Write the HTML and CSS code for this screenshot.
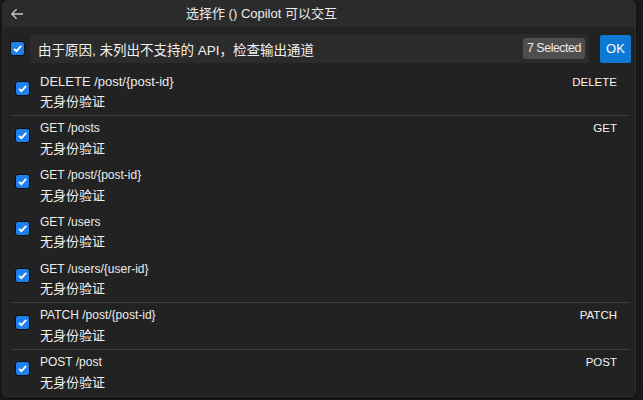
FILE: index.html
```html
<!DOCTYPE html>
<html lang="zh">
<head>
<meta charset="utf-8">
<title>Copilot</title>
<link rel="stylesheet" href="styles.css">
</head>
<body>
<div class="dialog">
  <div class="header">
    <svg class="back" width="16" height="16" viewBox="0 0 16 16"><path d="M14 8H2.8M7.6 3.2 2.8 8l4.8 4.8" fill="none" stroke="#c5c5c5" stroke-width="1.3"/></svg>
    <div class="title">选择作 () Copilot 可以交互</div>
  </div>
  <div class="inputrow">
    <span class="cb"><svg width="11" height="11" viewBox="0 0 11 11"><path d="M2 5.8 4.4 8.2 9.2 2.8" fill="none" stroke="#fff" stroke-width="1.9"/></svg></span>
    <div class="input">
      <span class="input-text">由于原因, 未列出不支持的 API，检查输出通道</span>
      <span class="badge">7 Selected</span>
    </div>
    <button class="ok">OK</button>
  </div>
  <div class="list">
    <div class="row">
      <span class="cb"><svg width="11" height="11" viewBox="0 0 11 11"><path d="M2 5.8 4.4 8.2 9.2 2.8" fill="none" stroke="#fff" stroke-width="1.9"/></svg></span>
      <div class="labels">
        <div class="line"><span class="name big">DELETE /post/{post-id}</span><span class="method">DELETE</span></div>
        <div class="desc">无身份验证</div>
      </div>
    </div>
    <div class="row sep">
      <span class="cb"><svg width="11" height="11" viewBox="0 0 11 11"><path d="M2 5.8 4.4 8.2 9.2 2.8" fill="none" stroke="#fff" stroke-width="1.9"/></svg></span>
      <div class="labels">
        <div class="line"><span class="name">GET /posts</span><span class="method">GET</span></div>
        <div class="desc">无身份验证</div>
      </div>
    </div>
    <div class="row">
      <span class="cb"><svg width="11" height="11" viewBox="0 0 11 11"><path d="M2 5.8 4.4 8.2 9.2 2.8" fill="none" stroke="#fff" stroke-width="1.9"/></svg></span>
      <div class="labels">
        <div class="line"><span class="name">GET /post/{post-id}</span></div>
        <div class="desc">无身份验证</div>
      </div>
    </div>
    <div class="row">
      <span class="cb"><svg width="11" height="11" viewBox="0 0 11 11"><path d="M2 5.8 4.4 8.2 9.2 2.8" fill="none" stroke="#fff" stroke-width="1.9"/></svg></span>
      <div class="labels">
        <div class="line"><span class="name">GET /users</span></div>
        <div class="desc">无身份验证</div>
      </div>
    </div>
    <div class="row">
      <span class="cb"><svg width="11" height="11" viewBox="0 0 11 11"><path d="M2 5.8 4.4 8.2 9.2 2.8" fill="none" stroke="#fff" stroke-width="1.9"/></svg></span>
      <div class="labels">
        <div class="line"><span class="name">GET /users/{user-id}</span></div>
        <div class="desc">无身份验证</div>
      </div>
    </div>
    <div class="row sep">
      <span class="cb"><svg width="11" height="11" viewBox="0 0 11 11"><path d="M2 5.8 4.4 8.2 9.2 2.8" fill="none" stroke="#fff" stroke-width="1.9"/></svg></span>
      <div class="labels">
        <div class="line"><span class="name">PATCH /post/{post-id}</span><span class="method">PATCH</span></div>
        <div class="desc">无身份验证</div>
      </div>
    </div>
    <div class="row sep">
      <span class="cb"><svg width="11" height="11" viewBox="0 0 11 11"><path d="M2 5.8 4.4 8.2 9.2 2.8" fill="none" stroke="#fff" stroke-width="1.9"/></svg></span>
      <div class="labels">
        <div class="line"><span class="name">POST /post</span><span class="method">POST</span></div>
        <div class="desc">无身份验证</div>
      </div>
    </div>
  </div>
</div>
</body>
</html>
```
FILE: styles.css
```css
* { box-sizing: border-box; }
html, body { margin: 0; padding: 0; }
body {
  background: #1a1a1a;
  width: 643px;
  height: 400px;
  overflow: hidden;
  font-family: "Liberation Sans", "Noto Sans CJK SC", sans-serif;
  color: #e6e6e6;
}
.dialog {
  margin-left: 2px;
  width: 634px;
  height: 397px;
  background: #222222;
  border-radius: 6px;
  border: 1px solid #2e2e2e;
  border-top: none;
  overflow: hidden;
  box-shadow: 0 0 6px rgba(0,0,0,0.5);
}
.header {
  height: 27px;
  background: #2b2b2b;
  display: flex;
  align-items: center;
}
.back { margin-left: 6px; flex: none; }
.title {
  margin-left: 161px;
  font-size: 13px;
  color: #ececec;
  line-height: 18px;
  padding-top: 1px;
}
.inputrow {
  margin-top: 7px;
  height: 29px;
  display: flex;
  align-items: center;
  padding-left: 7px;
}
.cb {
  width: 15px;
  height: 15px;
  flex: none;
  border-radius: 3px;
  background: #1f7fec;
  border: 1px solid #0e0e0e;
  display: flex;
  align-items: center;
  justify-content: center;
}
.input {
  margin-left: 5px;
  width: 559px;
  height: 29px;
  background: #2b2b2b;
  border-radius: 2px;
  display: flex;
  align-items: center;
  justify-content: space-between;
  padding: 0 4px 0 8px;
}
.input-text {
  font-size: 13.5px;
  color: #f0f0f0;
}
.badge {
  height: 21px;
  padding: 0 4px;
  background: #4e4e4e;
  border-radius: 3px;
  font-size: 12.5px;
  letter-spacing: -0.5px;
  line-height: 21px;
  color: #e8e8e8;
}
.ok {
  margin-left: 11px;
  width: 31px;
  height: 28px;
  border: none;
  border-radius: 2px;
  background: #0e78d4;
  color: #ffffff;
  font-family: "Liberation Sans", sans-serif;
  font-size: 13px;
  padding: 0;
}
.list { margin-top: 2px; }
.row {
  position: relative;
  height: 46.75px;
  display: flex;
  align-items: stretch;
  padding-left: 12px;
  padding-right: 18px;
}
.row.sep::before {
  content: "";
  position: absolute;
  top: 3px;
  left: 8px;
  right: 5px;
  height: 1px;
  background: #3d3d3d;
}
.row .cb { align-self: center; }
.labels {
  flex: 1;
  margin-left: 10px;
  padding-top: 7px;
}
.line {
  display: flex;
  justify-content: space-between;
  align-items: center;
  height: 19px;
}
.name {
  font-size: 12px;
  color: #ececec;
}
.name.big { font-size: 13px; }
.method {
  font-size: 11.5px;
  color: #f4f4f4;
}
.desc {
  font-family: "Noto Sans CJK SC", sans-serif;
  font-size: 13px;
  line-height: 20px;
  color: #f2f2f2;
}
```
